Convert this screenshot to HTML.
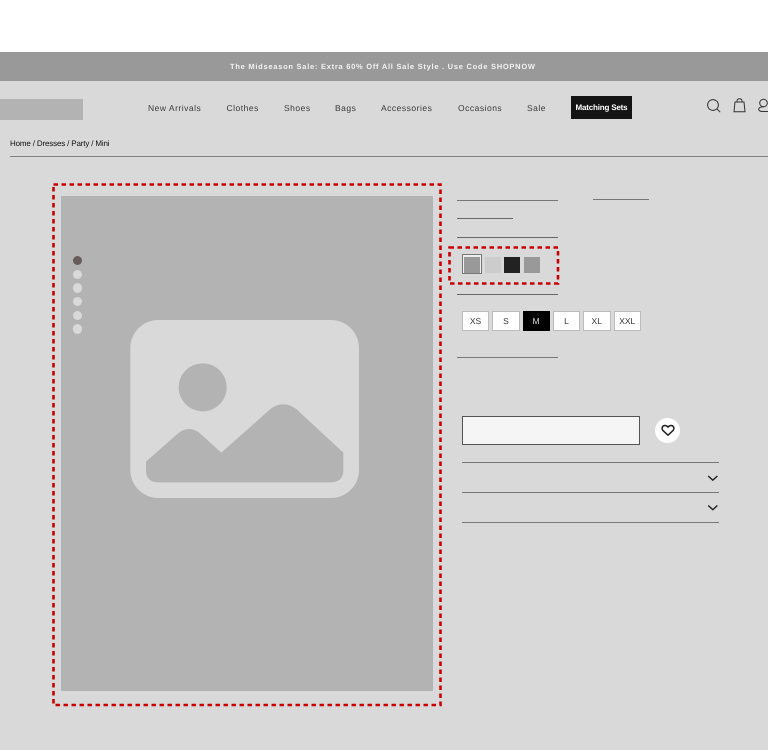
<!DOCTYPE html>
<html>
<head>
<meta charset="utf-8">
<style>
html,body{margin:0;padding:0;width:768px;height:750px;overflow:hidden;background:#d9d9d9;font-family:"Liberation Sans",sans-serif;text-rendering:geometricPrecision}
div,span,a{position:absolute;box-sizing:border-box}
.n{top:101.500px;font-size:8.5px;letter-spacing:.5px;color:#3a3a3a;line-height:12px;white-space:nowrap}
.l{height:1px;background:#666}
.s{top:311px;height:20px;background:#fff;border:1px solid #bbb;font-size:8.5px;color:#333;text-align:center;line-height:19px}
.sw{top:256.500px;width:16px;height:16px}
.d{left:73px;width:9.4px;height:9.4px;border-radius:50%;background:#d9d9d9}
</style>
</head>
<body>
<div style="left:0;top:0;width:768px;height:750px;filter:blur(.3px)">
<div style="left:0;top:0;width:768px;height:52px;background:#fff"></div>
<div style="left:0;top:52px;width:768px;height:29px;background:#999"></div>
<div style="left:230px;top:61px;font-size:7.5px;line-height:12px;letter-spacing:.735px;color:#f2f2f2;font-weight:bold;white-space:nowrap">The Midseason Sale: Extra 60% Off All Sale Style . Use Code SHOPNOW</div>

<div style="left:0;top:99px;width:83px;height:21px;background:#b3b3b3"></div>

<span class="n" style="left:148px">New Arrivals</span>
<span class="n" style="left:226.500px">Clothes</span>
<span class="n" style="left:284px">Shoes</span>
<span class="n" style="left:335px">Bags</span>
<span class="n" style="left:381px">Accessories</span>
<span class="n" style="left:458px">Occasions</span>
<span class="n" style="left:527px">Sale</span>
<div style="left:571px;top:96px;width:61px;height:23px;background:#141414;color:#fff;font-size:8px;letter-spacing:-.18px;font-weight:bold;text-align:center;line-height:23px;white-space:nowrap">Matching Sets</div>

<svg style="position:absolute;left:700px;top:90px" width="68" height="30" viewBox="0 0 68 30" fill="none" stroke="#333" stroke-width="1">
<circle cx="13" cy="15" r="5.4"/>
<path d="M17 19l3.200 3.200"/>
<path d="M35 12h9l1 9.700h-11zM37 12.500v-1.500c0-3 5-3 5 0v1.500"/>
<circle cx="63.500" cy="13" r="3.800"/>
<path d="M70 21.500H62.500C59.800 21.500 58.300 20.200 58.800 18.800 59.300 17.300 62 16.800 64 16.800"/>
</svg>

<div style="left:10px;top:138px;font-size:8px;letter-spacing:-.16px;line-height:12px;color:#111;white-space:nowrap">Home / Dresses / Party / Mini</div>
<div style="left:10px;top:156px;width:758px;height:1px;background:#808080"></div>

<div style="left:61px;top:195.500px;width:372px;height:495px;background:#b3b3b3"></div>
<svg style="position:absolute;left:120px;top:310px" width="250" height="200" viewBox="0 0 750 600">
<rect x="31" y="30" width="686" height="534" rx="84" fill="#d9d9d9"/>
<circle cx="248" cy="232" r="72" fill="#b3b3b3"/>
<path d="M78 455L172 372C195 352 220 352 242 372L304 428L448 300C475 277 505 277 532 300L670 428V480Q670 517 632 517H115Q78 517 78 480Z" fill="#b3b3b3"/>
</svg>

<div class="d" style="top:255.600px;background:#665c5c"></div>
<div class="d" style="top:269.600px"></div>
<div class="d" style="top:283.300px"></div>
<div class="d" style="top:297px"></div>
<div class="d" style="top:310.600px"></div>
<div class="d" style="top:324.300px"></div>

<svg style="position:absolute;left:0;top:0" width="768" height="750" fill="none" stroke="#c80000" stroke-width="2.600" stroke-dasharray="4.500 3.500">
<rect x="53.500" y="184.500" width="387" height="520.500"/>
<rect x="449.500" y="247.500" width="108.500" height="36"/>
</svg>

<div class="l" style="left:457px;top:200px;width:101px;background:#777"></div>
<div class="l" style="left:593px;top:199px;width:56px;background:#777"></div>
<div class="l" style="left:457px;top:218px;width:56px"></div>
<div class="l" style="left:457px;top:236.500px;width:101px"></div>
<div class="l" style="left:457px;top:294px;width:101px"></div>
<div class="l" style="left:457px;top:356.500px;width:101px;background:#777"></div>

<div style="left:462px;top:254px;width:20px;height:20px;border:1px solid #777;background:#eee"></div>
<div class="sw" style="left:464px;background:#999"></div>
<div class="sw" style="left:484.500px;background:#ccc"></div>
<div class="sw" style="left:504px;background:#222"></div>
<div class="sw" style="left:524px;background:#999"></div>

<div class="s" style="left:462px;width:27px">XS</div>
<div class="s" style="left:492px;width:28px">S</div>
<div class="s" style="left:522.500px;width:27px;background:#000;color:#ddd;border-color:#000">M</div>
<div class="s" style="left:553px;width:27px">L</div>
<div class="s" style="left:583px;width:27.500px">XL</div>
<div class="s" style="left:613.500px;width:27.500px">XXL</div>

<div style="left:461.500px;top:416px;width:178.500px;height:28.500px;background:#f5f5f5;border:1px solid #555"></div>
<div style="left:655px;top:418px;width:25px;height:25px;border-radius:50%;background:#fff"></div>
<svg style="position:absolute;left:661px;top:424px" width="14" height="13" viewBox="0 0 14 13" fill="none" stroke="#222" stroke-width="1.500" stroke-linejoin="round">
<path d="M7 11.200L2 6.600C.2 4.500 1.300 1.500 4 1.500 5.300 1.500 6.300 2.200 7 3.200 7.700 2.200 8.700 1.500 10 1.500 12.700 1.500 13.800 4.500 12 6.600Z"/>
</svg>

<div class="l" style="left:462px;top:462px;width:257px;background:#777"></div>
<div class="l" style="left:462px;top:492px;width:257px;background:#777"></div>
<div class="l" style="left:462px;top:522px;width:257px;background:#777"></div>
<svg style="position:absolute;left:700px;top:470px" width="26" height="46" fill="none" stroke="#222" stroke-width="1.400">
<path d="M8.200 6l4.600 4.200 4.600-4.200"/>
<path d="M8.200 35.500l4.600 4.200 4.600-4.200"/>
</svg>
</div>
</body>
</html>
